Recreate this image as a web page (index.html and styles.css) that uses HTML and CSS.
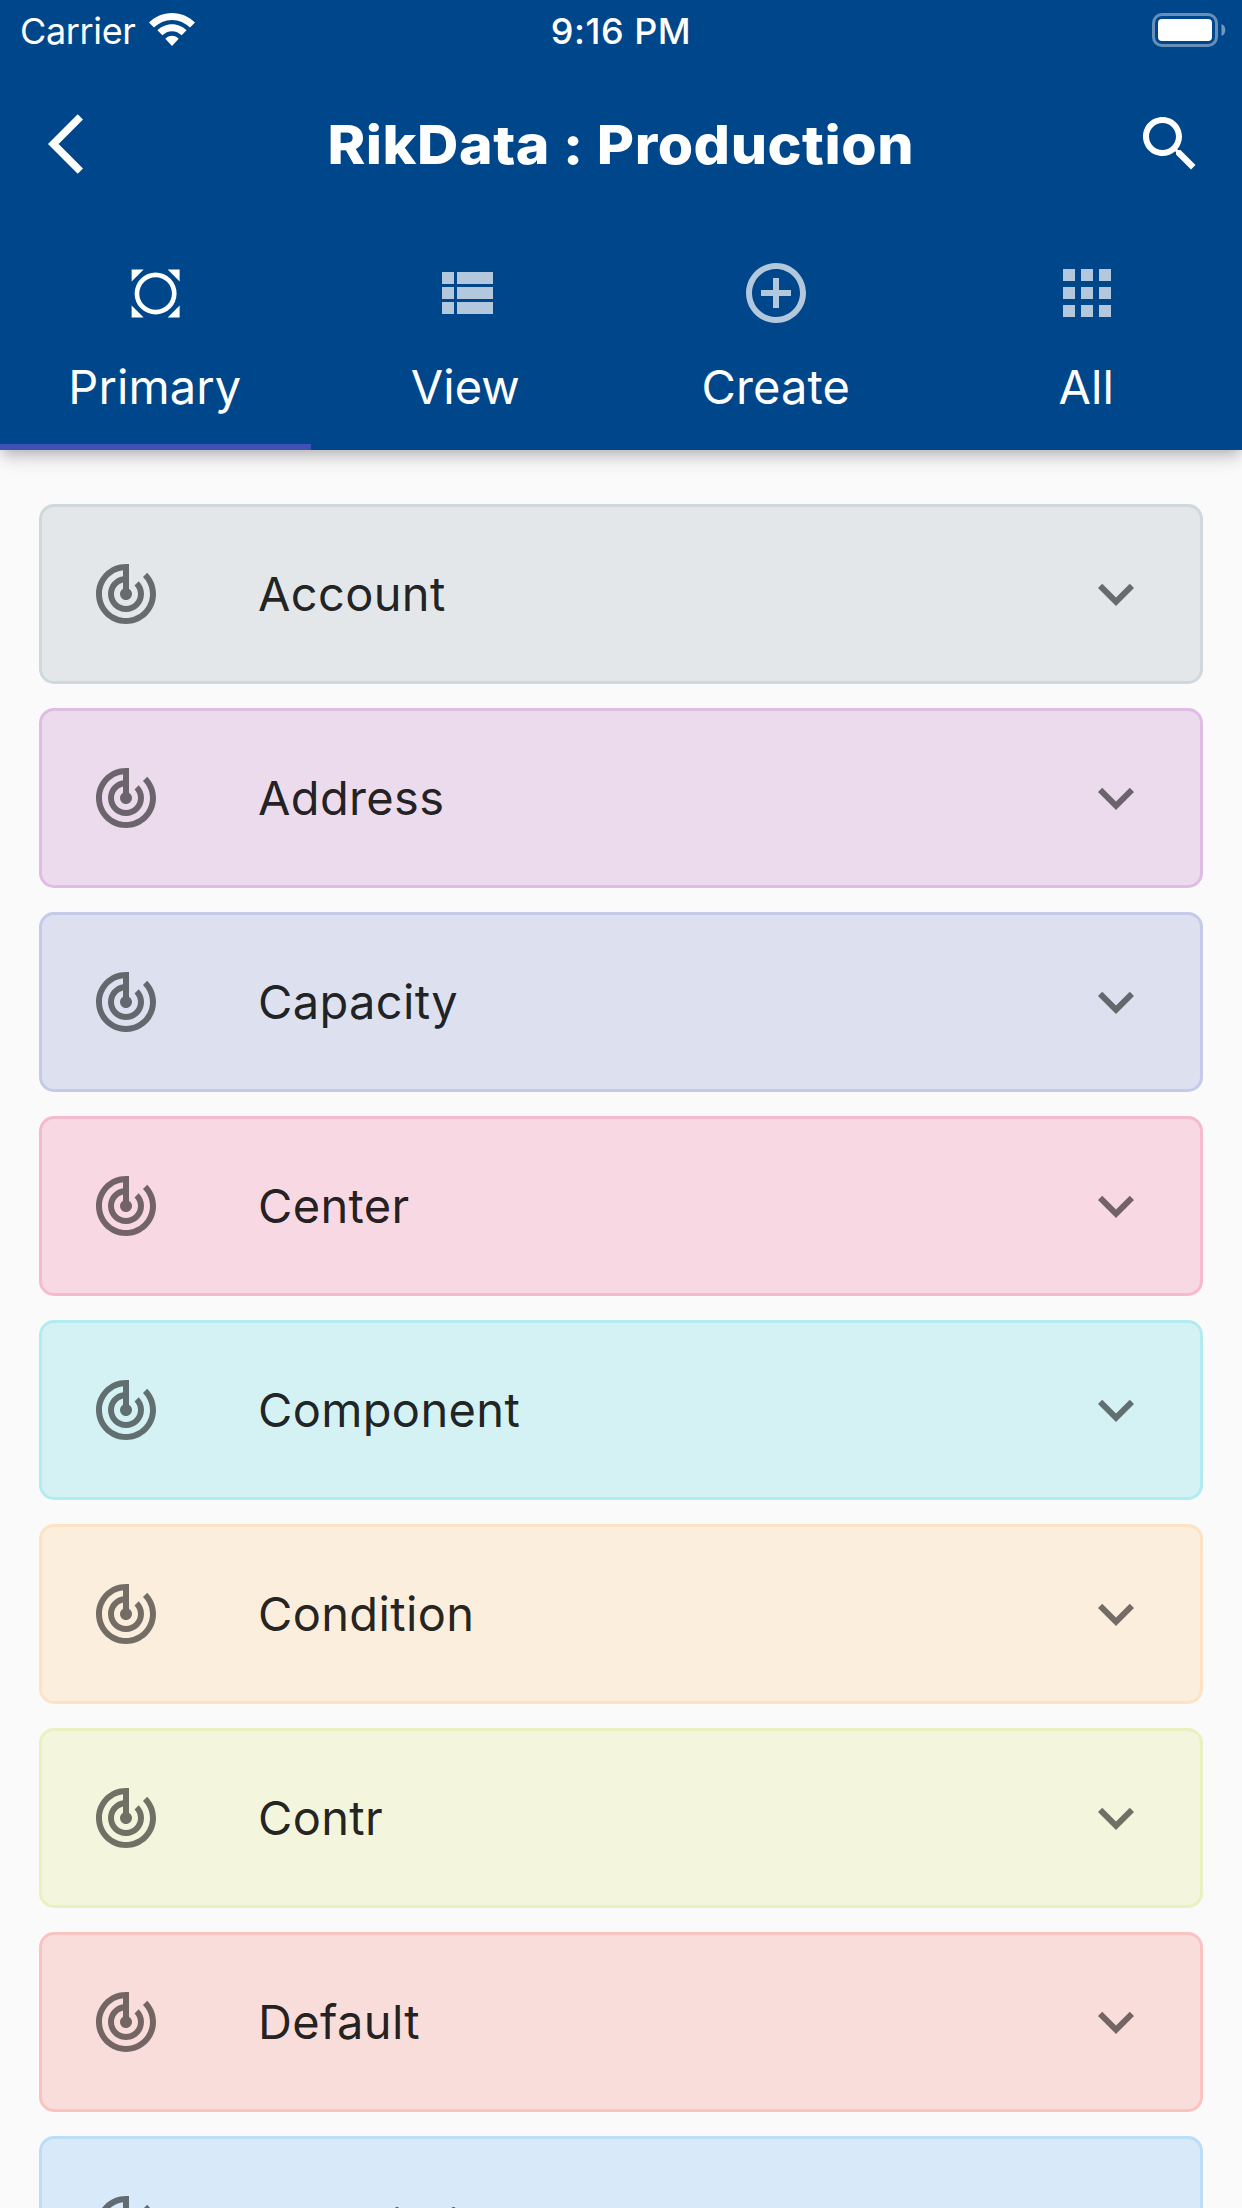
FILE: index.html
```html
<!DOCTYPE html>
<html lang="en">
<head>
<meta charset="utf-8">
<title>RikData : Production</title>
<link rel="stylesheet" href="styles.css">
</head>
<body>
<svg class="defs" aria-hidden="true">
  <symbol id="track" viewBox="0 0 24 24"><path d="M19.07 4.93l-1.41 1.41C19.1 7.79 20 9.79 20 12c0 4.42-3.58 8-8 8s-8-3.58-8-8c0-4.08 3.05-7.44 7-7.93v2.02C8.16 6.57 6 9.03 6 12c0 3.31 2.69 6 6 6s6-2.69 6-6c0-1.66-.67-3.16-1.76-4.24l-1.41 1.41C15.55 9.9 16 10.9 16 12c0 2.21-1.79 4-4 4s-4-1.79-4-4c0-1.86 1.28-3.41 3-3.86v2.14c-.6.35-1 .98-1 1.72 0 1.1.9 2 2 2s2-.9 2-2c0-.74-.4-1.38-1-1.72V2h-1C6.48 2 2 6.48 2 12s4.48 10 10 10 10-4.48 10-10c0-2.76-1.12-5.26-2.93-7.07z"/></symbol>
  <symbol id="more" viewBox="0 0 24 24"><path d="M16.59 8.59L12 13.17 7.41 8.59 6 10l6 6 6-6z"/></symbol>
</svg>
<header class="header">
  <div class="status">
    <div class="status-left">
      <span class="carrier">Carrier</span>
      <svg class="wifi" viewBox="0 0 46 33"><path d="M23 0C32 0 40 3.600 46 9.600L41 14.600C36.200 9.900 30 7 23 7S9.800 9.900 5 14.600L0 9.600C6 3.600 14 0 23 0Z"/><path d="M23 11.200C28.700 11.200 33.800 13.500 37.600 17.300L32.600 22.300C30 19.800 26.700 18.200 23 18.200S16 19.800 13.400 22.300L8.400 17.300C12.200 13.500 17.300 11.200 23 11.200Z"/><path d="M23 22.800C25.500 22.800 27.900 24 29.700 25.700L23 33L16.300 25.700C18.100 24 20.500 22.800 23 22.800Z"/></svg>
    </div>
    <span class="time">9:16 PM</span>
    <svg class="battery" viewBox="0 0 74 34"><rect class="shell" x="1.500" y="1.500" width="63" height="31" rx="8.500"/><rect x="6" y="6" width="54" height="22" rx="4"/><path class="nub" d="M69.500 11C72 12 73.300 14.200 73.300 17S72 22 69.500 23Z"/></svg>
  </div>
  <div class="appbar">
    <svg class="icon" viewBox="0 0 24 24"><path d="M11.67 3.87L9.9 2.1 0 12l9.9 9.9 1.77-1.77L3.54 12z"/></svg>
    <h1 class="title">RikData : Production</h1>
    <svg class="icon" viewBox="0 0 24 24"><path d="M15.5 14h-.79l-.28-.27C15.410 12.590 16 11.110 16 9.500 16 5.910 13.090 3 9.500 3S3 5.910 3 9.500 5.910 16 9.500 16c1.610 0 3.090-.59 4.230-1.570l.27.28v.79l5 4.990L20.490 19l-4.990-5zm-6 0C7.010 14 5 11.990 5 9.500S7.010 5 9.500 5 14 7.010 14 9.500 11.990 14 9.500 14z"/></svg>
  </div>
  <nav class="tabs">
    <div class="tab active"><svg class="icon" viewBox="0 0 24 24"><path d="M16.210 4.160l4 4v-4zm4 12l-4 4h4zm-12 4l-4-4v4zm-4-12l4-4h-4zm12.950-.95c-2.730-2.730-7.170-2.730-9.900 0s-2.730 7.170 0 9.900 7.170 2.730 9.900 0 2.730-7.160 0-9.900zm-1.100 8.800c-2.130 2.130-5.570 2.130-7.700 0s-2.130-5.570 0-7.700 5.570-2.130 7.700 0 2.130 5.570 0 7.700z"/></svg><span>Primary</span></div>
    <div class="tab"><svg class="icon" viewBox="0 0 24 24"><path d="M4 14h4v-4H4v4zm0 5h4v-4H4v4zM4 9h4V5H4v4zm5 5h12v-4H9v4zm0 5h12v-4H9v4zM9 5v4h12V5H9z"/></svg><span>View</span></div>
    <div class="tab"><svg class="icon" viewBox="0 0 24 24"><path d="M13 7h-2v4H7v2h4v4h2v-4h4v-2h-4V7zm-1-5C6.480 2 2 6.480 2 12s4.480 10 10 10 10-4.480 10-10S17.520 2 12 2zm0 18c-4.410 0-8-3.590-8-8s3.590-8 8-8 8 3.590 8 8-3.590 8-8 8z"/></svg><span>Create</span></div>
    <div class="tab"><svg class="icon" viewBox="0 0 24 24"><path d="M4 8h4V4H4v4zm6 12h4v-4h-4v4zm-6 0h4v-4H4v4zm0-6h4v-4H4v4zm6 0h4v-4h-4v4zm6-10v4h4V4h-4zm-6 4h4V4h-4v4zm6 6h4v-4h-4v4zm0 6h4v-4h-4v4z"/></svg><span>All</span></div>
  </nav>
</header>
<main class="list">
  <div class="card grey"><svg class="icon"><use href="#track"/></svg><span class="label">Account</span><svg class="icon"><use href="#more"/></svg></div>
  <div class="card purple"><svg class="icon"><use href="#track"/></svg><span class="label">Address</span><svg class="icon"><use href="#more"/></svg></div>
  <div class="card indigo"><svg class="icon"><use href="#track"/></svg><span class="label">Capacity</span><svg class="icon"><use href="#more"/></svg></div>
  <div class="card pink"><svg class="icon"><use href="#track"/></svg><span class="label">Center</span><svg class="icon"><use href="#more"/></svg></div>
  <div class="card cyan"><svg class="icon"><use href="#track"/></svg><span class="label">Component</span><svg class="icon"><use href="#more"/></svg></div>
  <div class="card orange"><svg class="icon"><use href="#track"/></svg><span class="label">Condition</span><svg class="icon"><use href="#more"/></svg></div>
  <div class="card lime"><svg class="icon"><use href="#track"/></svg><span class="label">Contr</span><svg class="icon"><use href="#more"/></svg></div>
  <div class="card red"><svg class="icon"><use href="#track"/></svg><span class="label">Default</span><svg class="icon"><use href="#more"/></svg></div>
  <div class="card blue"><svg class="icon"><use href="#track"/></svg><span class="label">Description</span><svg class="icon"><use href="#more"/></svg></div>
</main>
</body>
</html>
```
FILE: styles.css
```css
* { box-sizing: border-box; }

body {
  margin: 0;
  height: 2208px;
  overflow: hidden;
  display: flex;
  flex-direction: column;
  background: #fafafa;
  font-family: Inter, "Liberation Sans", sans-serif;
}

.defs { display: none; }
svg { display: block; fill: currentColor; }
.icon { width: 72px; height: 72px; flex: none; }

.header {
  flex: none;
  height: 450px;
  background: #00468b;
  color: #fff;
  box-shadow: 0 6px 12px -3px rgba(0, 0, 0, .2), 0 12px 15px rgba(0, 0, 0, .07), 0 3px 24px rgba(0, 0, 0, .06);
}

.status {
  height: 60px;
  display: grid;
  grid-template-columns: 1fr auto 1fr;
  align-items: center;
  padding: 2px 16px 0 20px;
  font-size: 36px;
  line-height: 44px;
}
.status-left { display: flex; align-items: center; gap: 13px; }
.carrier { letter-spacing: -.35px; }
.wifi { width: 46px; height: 33px; margin-top: -3px; }
.time { font-weight: 550; letter-spacing: .5px; margin-right: 4px; }
.battery { width: 74px; height: 34px; justify-self: end; margin-top: -2px; }
.shell { fill: none; stroke: #fff; stroke-width: 3; opacity: .4; }
.nub { opacity: .45; }

.appbar {
  height: 168px;
  display: flex;
  align-items: center;
  justify-content: space-between;
  padding: 0 36px 0 48px;
}
.title {
  margin: 0 0 0 -12px;
  padding: 2px 0 0;
  font-size: 54px;
  line-height: 66px;
  font-weight: 800;
  letter-spacing: .5px;
  transform: scaleX(1.06);
}

.tabs { display: grid; grid-template-columns: repeat(4, 1fr); height: 222px; }
.tab {
  display: flex;
  flex-direction: column;
  align-items: center;
  gap: 30px;
  padding-top: 29px;
  border-bottom: 6px solid transparent;
  font-size: 47px;
  line-height: 56px;
  letter-spacing: .1px;
}
.tab span { margin-right: 1px; }
.tab .icon { opacity: .7; }
.tab.active { border-bottom-color: #3f51b5; }
.tab.active .icon { opacity: 1; }

.list { display: flex; flex-direction: column; gap: 24px; padding: 54px 39px 0; }
.card {
  flex: none;
  height: 180px;
  display: flex;
  align-items: center;
  padding: 0 48px;
  border: 3px solid;
  border-radius: 15px;
}
.card .icon { color: rgba(0, 0, 0, .54); }
.label {
  flex: 1;
  padding-left: 96px;
  font-size: 47px;
  line-height: 58px;
  letter-spacing: .35px;
  color: rgba(0, 0, 0, .87);
}

.grey { background: #e3e7ea; border-color: #cfd8dc; }
.purple { background: #ecdbed; border-color: #dfbce4; }
.indigo { background: #dde0ef; border-color: #c5cae9; }
.pink { background: #f8d8e3; border-color: #f6bacf; }
.cyan { background: #d4f2f4; border-color: #b2ebf0; }
.orange { background: #fceedd; border-color: #fde2c3; }
.lime { background: #f3f5dd; border-color: #ebf0c0; }
.red { background: #f9dddb; border-color: #f9c4c0; }
.blue { background: #d8e9f9; border-color: #bbddf8; }
```
